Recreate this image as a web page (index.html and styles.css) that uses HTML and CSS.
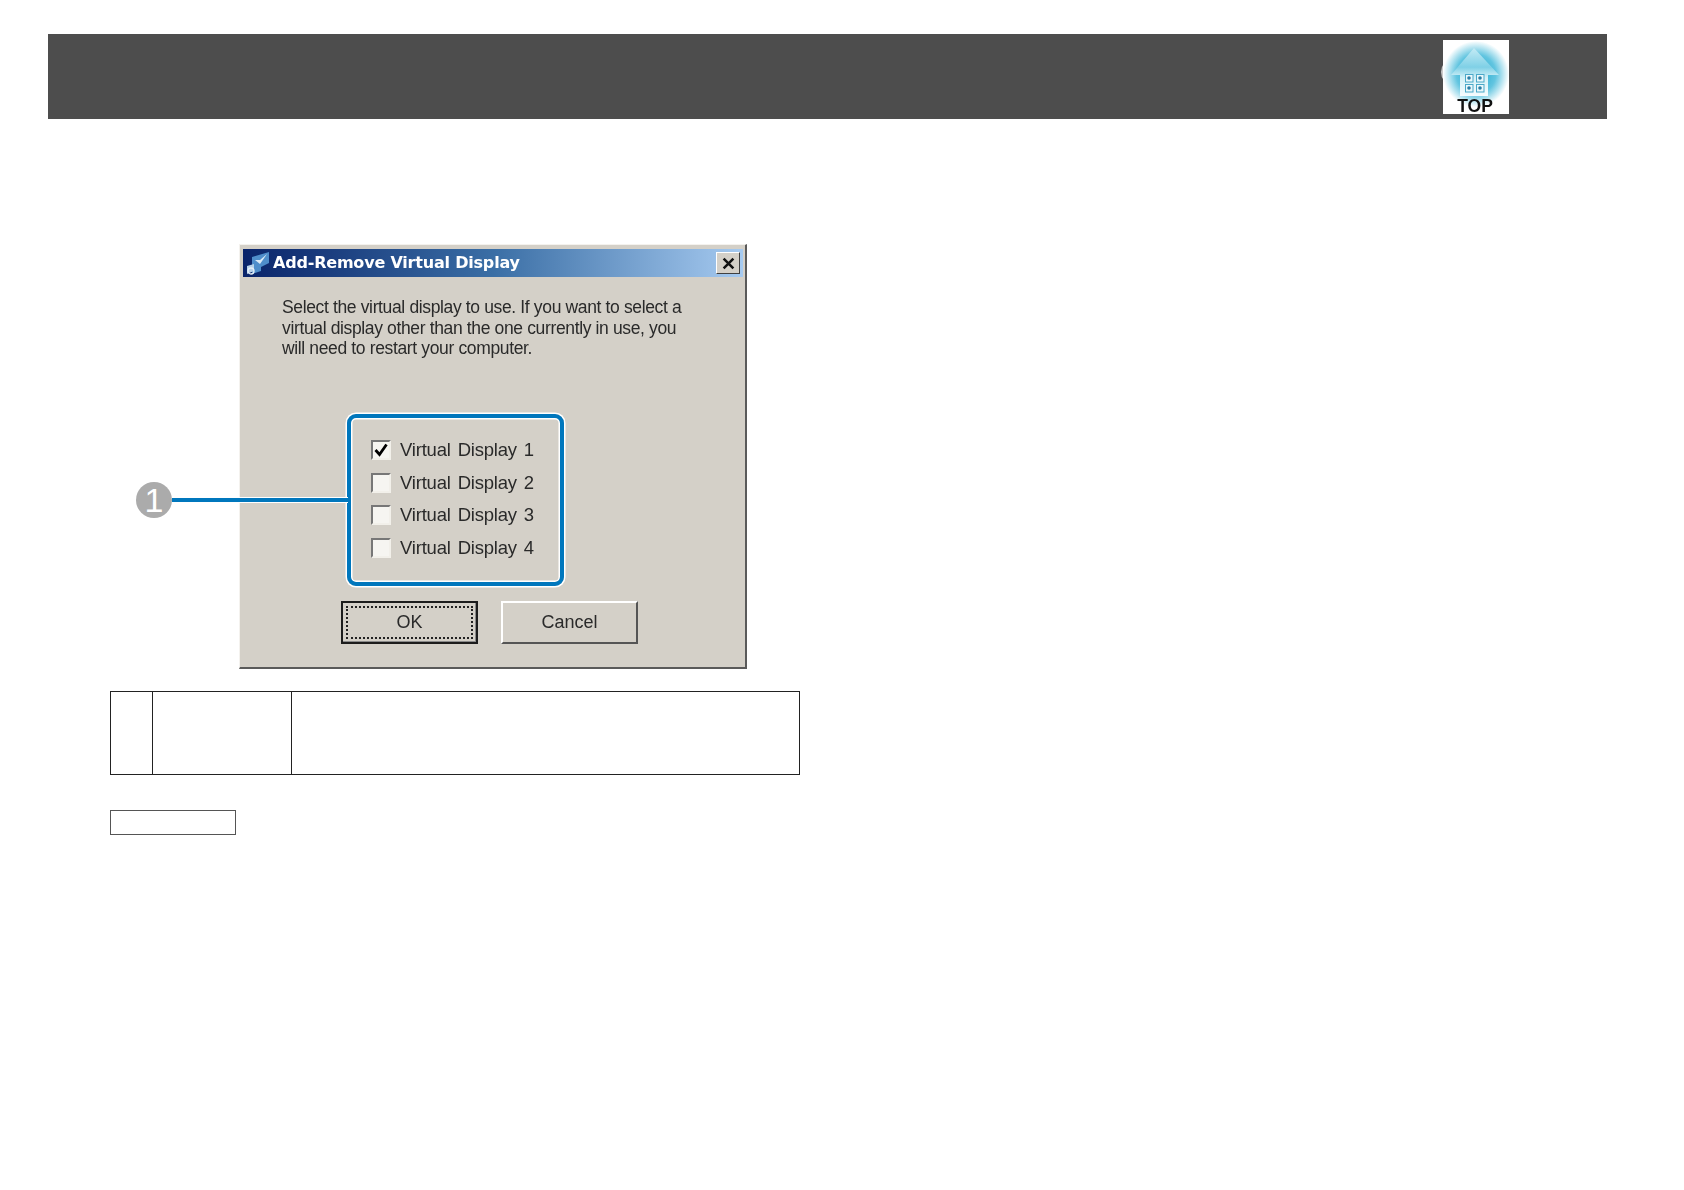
FILE: index.html
```html
<!DOCTYPE html>
<html lang="en">
<head>
<meta charset="utf-8">
<title>Add-Remove Virtual Display</title>
<link rel="stylesheet" href="styles.css">
</head>
<body>
<header class="band">
  <a class="top-link" href="#">
    <svg class="top-icon" viewBox="0 0 66 74" width="66" height="74" aria-label="TOP">
      <defs>
        <radialGradient id="glow" cx="50%" cy="50%" r="50%">
          <stop offset="0" stop-color="#18a4cb"/>
          <stop offset="0.6" stop-color="#62c5e0"/>
          <stop offset="1" stop-color="#ffffff"/>
        </radialGradient>
        <linearGradient id="house" x1="0" y1="0" x2="0" y2="1">
          <stop offset="0" stop-color="#c4ebf5"/>
          <stop offset="0.4" stop-color="#7fd0e6"/>
          <stop offset="0.62" stop-color="#d4f1f7"/>
          <stop offset="1" stop-color="#f6fcfe"/>
        </linearGradient>
      </defs>
      <rect width="66" height="74" fill="#fff"/>
      <circle cx="33" cy="34" r="33" fill="url(#glow)"/>
      <path d="M31 8 L56 35 H45 V56 H17 V35 H8 Z" fill="url(#house)"/>
      <g fill="#eaf8fb" stroke="#4aa9c9">
        <rect x="22.500" y="34.500" width="7.500" height="7.500"/>
        <rect x="33.500" y="34.500" width="7.500" height="7.500"/>
        <rect x="22.500" y="44.500" width="7.500" height="7.500"/>
        <rect x="33.500" y="44.500" width="7.500" height="7.500"/>
      </g>
      <g fill="#2b7fa6">
        <circle cx="26" cy="38" r="1.800"/>
        <circle cx="37" cy="38" r="1.800"/>
        <circle cx="26" cy="48" r="1.800"/>
        <circle cx="37" cy="48" r="1.800"/>
      </g>
      <text class="top-label" x="32" y="72" text-anchor="middle">TOP</text>
    </svg>
    <span class="top-halo"></span>
  </a>
</header>

<main class="content">
  <figure class="shot">
    <div class="callout">
      <span class="callout-num">1</span>
      <span class="callout-line"></span>
    </div>
    <section class="dialog">
      <div class="titlebar">
        <svg class="app-icon" viewBox="0 0 24 24" width="24" height="24">
          <path d="M6 6 L23 1 V12 L15 16 V20 L6 23 Z" fill="#4f8ecb"/>
          <path d="M9 9 L14 13 L21 3 L14 9 Z" fill="#dbeaf7"/>
          <path d="M1 15 L8 13 V20 L1 23 Z" fill="#b9d3ea"/>
          <circle cx="5" cy="20" r="3" fill="none" stroke="#e6eff8" stroke-width="1.300"/>
        </svg>
        <h1 class="title">Add-Remove Virtual Display</h1>
        <button class="close" type="button" aria-label="Close">
          <svg viewBox="0 0 12 12" width="13" height="13"><path d="M1.500 1.500 L10.500 10.500 M10.500 1.500 L1.500 10.500" stroke="#111" stroke-width="2.300" fill="none"/></svg>
        </button>
      </div>
      <p class="message">Select the virtual display to use. If you want to select a<br>virtual display other than the one currently in use, you<br>will need to restart your computer.</p>
      <div class="choices">
        <div class="choice"><span class="box"><svg viewBox="0 0 16 16" width="16" height="16"><path d="M2.500 8 L6.500 12.500 L13.500 2.500" fill="none" stroke="#000" stroke-width="2.800"/></svg></span><span class="choice-label">Virtual Display 1</span></div>
        <div class="choice"><span class="box"></span><span class="choice-label">Virtual Display 2</span></div>
        <div class="choice"><span class="box"></span><span class="choice-label">Virtual Display 3</span></div>
        <div class="choice"><span class="box"></span><span class="choice-label">Virtual Display 4</span></div>
      </div>
      <div class="actions">
        <button class="btn btn-default" type="button"><span class="focus">OK</span></button>
        <button class="btn" type="button">Cancel</button>
      </div>
    </section>
  </figure>

  <table class="legend">
    <tr>
      <td class="col-a"></td>
      <td class="col-b"></td>
      <td></td>
    </tr>
  </table>

  <div class="note-tag"></div>
</main>
</body>
</html>
```
FILE: styles.css
```css
* { box-sizing: border-box; }

html, body {
  margin: 0;
  padding: 0;
  background: #fff;
}

body {
  font-family: "Liberation Sans", Arial, sans-serif;
  color: #1a1a1a;
}

.band {
  display: flex;
  justify-content: flex-end;
  width: 1559px;
  height: 85px;
  margin: 34px 0 0 48px;
  padding: 6px 98px 0 0;
  background: #4d4d4d;
}

.top-link {
  position: relative;
  display: block;
  width: 66px;
  height: 74px;
}

.top-icon {
  position: relative;
  z-index: 1;
  display: block;
  overflow: visible;
  filter: blur(0.4px);
}

.top-label {
  font-family: "Liberation Sans", Arial, sans-serif;
  font-weight: 700;
  font-size: 17.5px;
  fill: #111;
}

.top-halo {
  position: absolute;
  left: -2px;
  top: 20px;
  width: 20px;
  height: 24px;
  border-radius: 50%;
  background: #c9c9c9;
}

.content {
  padding-left: 110px;
}

.shot {
  position: relative;
  width: 637px;
  margin: 125px 0 0 129px;
}

.dialog {
  display: flex;
  flex-direction: column;
  width: 508px;
  height: 425px;
  padding: 4px 2px 0 3px;
  background: #d4d0c8;
  border: 1px solid #f4f2ee;
  border-right: 2px solid #5a5a5a;
  border-bottom: 2px solid #5a5a5a;
  filter: blur(0.45px);
}

.titlebar {
  display: flex;
  align-items: center;
  flex: none;
  height: 28px;
  padding: 0 3px 0 3px;
  background: linear-gradient(90deg, #0a246a 0%, #3a6ea5 50%, #a6caf0 100%);
}

.app-icon {
  flex: none;
}

.title {
  flex: 1;
  margin: 0 0 0 3px;
  font-family: "DejaVu Sans", sans-serif;
  font-size: 16px;
  font-weight: 700;
  line-height: 28px;
  letter-spacing: -0.2px;
  color: #fff;
  white-space: nowrap;
}

.close {
  display: flex;
  align-items: center;
  justify-content: center;
  flex: none;
  width: 24px;
  height: 22px;
  padding: 0;
  background: #d4d0c8;
  border: 1px solid;
  border-color: #fff #404040 #404040 #fff;
}

.message {
  margin: 20px 0 0 39px;
  font-size: 17.5px;
  line-height: 20.5px;
  letter-spacing: -0.36px;
  white-space: nowrap;
  color: #2a2a2a;
}

.choices {
  display: flex;
  flex-direction: column;
  align-items: flex-start;
  width: 217px;
  height: 172px;
  margin: 55px 0 0 104px;
  padding: 16px 0 0 20px;
  border: 4px solid #0077bd;
  border-radius: 9px;
  box-shadow: 0 0 0 1.5px #fff, inset 0 0 0 1.5px #fff;
}

.choice {
  display: flex;
  align-items: center;
  height: 32.7px;
}

.box {
  display: flex;
  align-items: center;
  justify-content: center;
  width: 20px;
  height: 20px;
  background: #f6f5f1;
  border: 2px solid;
  border-color: #777 #f2f0ea #f2f0ea #777;
}

.choice-label {
  margin-left: 9px;
  font-size: 18.5px;
  letter-spacing: -0.2px;
  word-spacing: 2px;
  white-space: nowrap;
  color: #2a2a2a;
}

.actions {
  display: flex;
  gap: 23px;
  margin: 15px 0 0 98px;
}

.btn {
  display: flex;
  align-items: center;
  justify-content: center;
  width: 137px;
  height: 43px;
  padding: 0;
  font-family: "Liberation Sans", Arial, sans-serif;
  font-size: 18px;
  color: #2a2a2a;
  background: #d4d0c8;
  border: 2px solid;
  border-color: #fff #555 #555 #fff;
}

.btn-default {
  border: 2px solid #1c1c1c;
  box-shadow: inset -1px -1px 0 #8a8a8a;
}

.focus {
  display: flex;
  align-items: center;
  justify-content: center;
  width: 127px;
  height: 33px;
  border: 2px dotted #222;
}

.callout {
  position: absolute;
  left: -103px;
  top: 239px;
  z-index: 1;
  display: flex;
  align-items: center;
  width: 212px;
  height: 34px;
}

.callout-num {
  display: flex;
  align-items: center;
  justify-content: center;
  flex: none;
  width: 36px;
  height: 36px;
  font-size: 34px;
  line-height: 36px;
  color: #fff;
  background: #ababab;
  border-radius: 50%;
}

.callout-line {
  flex: 1;
  height: 6px;
  background: #0077bd;
  border-top: 1px solid #fff;
  border-bottom: 1px solid #fff;
}

.legend {
  width: 690px;
  height: 84px;
  margin-top: 22px;
  table-layout: fixed;
  border-collapse: collapse;
}

.legend td {
  padding: 0;
  border: 1px solid #222;
}

.col-a { width: 42px; }
.col-b { width: 139px; }

.note-tag {
  width: 126px;
  height: 25px;
  margin-top: 35px;
  border: 1px solid #555;
}
```
